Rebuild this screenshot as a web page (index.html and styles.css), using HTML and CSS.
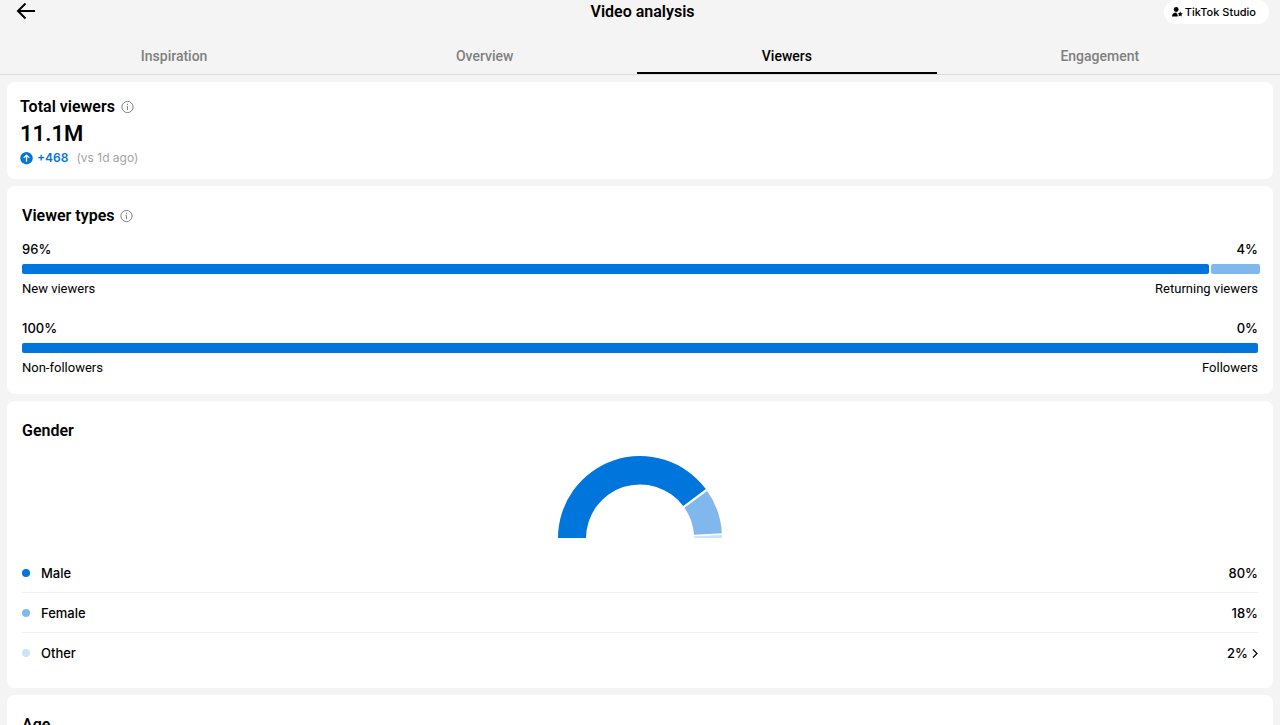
FILE: index.html
```html
<!DOCTYPE html>
<html lang="en">
<head>
    <meta charset="UTF-8">
    <meta name="viewport" content="width=device-width, initial-scale=1.0">
    <title>Video analysis</title>
    <link rel="stylesheet" href="styles.css">
</head>

<body>
    <!-- Top bar -->
    <header class="topbar">
        <button class="back" type="button" aria-label="Back">
            <svg width="20" height="18" viewBox="0 0 20 18" fill="none" stroke="#000" stroke-width="2">
                <path d="M19 8H2M9.500 .500L2 8l7.500 7.500"/>
            </svg>
        </button>
        <h1>Video analysis</h1>
        <a class="studio" href="#studio">
            <svg width="11" height="10" viewBox="0 0 11 10" fill="#000">
                <circle cx="4.200" cy="2.500" r="2.400"/>
                <path d="M0 9.500C0 6.700 1.800 5.500 4.200 5.500L5 7l.8 1-.3 1.500z"/>
                <path d="M8.200 4.600l.8 1.500 1.800.3-1.300 1.200.3 1.800-1.600-.8-1.600.8.300-1.800-1.200-1.200 1.700-.3z"/>
            </svg>
            TikTok Studio
        </a>
    </header>

    <!-- Tabs -->
    <nav class="tabs">
        <a href="#inspiration">Inspiration</a>
        <a href="#overview">Overview</a>
        <a href="#viewers" class="active">Viewers</a>
        <a href="#engagement">Engagement</a>
    </nav>

    <main class="content">
        <section class="card total">
            <h2>Total viewers
                <svg class="info" viewBox="0 0 13 13" fill="none" stroke="#808080">
                    <circle cx="6.500" cy="6" r="5.600"/>
                    <path d="M6.500 2.800v1.200M5.500 5.400h1v3.600"/>
                </svg>
            </h2>
            <p class="number">11.1M</p>
            <p class="change">
                <svg width="13" height="13" viewBox="0 0 13 13" fill="none" stroke="#fff" stroke-width="1.300">
                    <circle cx="6.500" cy="6.200" r="6.200" fill="#0075dc" stroke="none"/>
                    <path d="M6.500 9.700V3.200M3.700 5.900l2.800-2.800 2.800 2.800"/>
                </svg>
                <strong>+468</strong>
                <span>(vs 1d ago)</span>
            </p>
        </section>

        <section class="card types">
            <h2>Viewer types
                <svg class="info" viewBox="0 0 13 13" fill="none" stroke="#808080">
                    <circle cx="6.500" cy="6" r="5.600"/>
                    <path d="M6.500 2.800v1.200M5.500 5.400h1v3.600"/>
                </svg>
            </h2>
            <div class="split">
                <div class="values"><span>96%</span><span>4%</span></div>
                <div class="bar"><i class="dark" style="width: 96%"></i><i class="light" style="width: 4%"></i></div>
                <div class="labels"><span>New viewers</span><span>Returning viewers</span></div>
            </div>
            <div class="split">
                <div class="values"><span>100%</span><span>0%</span></div>
                <div class="bar"><i class="dark" style="width: 100%"></i></div>
                <div class="labels"><span>Non-followers</span><span>Followers</span></div>
            </div>
        </section>

        <section class="card gender">
            <h2>Gender</h2>
            <svg class="chart" width="164" height="82" viewBox="0 0 164 82">
                <path fill="#0075dc" d="M0 82A82 82 0 0 1 147.800 33.100L125.200 50A54 54 0 0 0 28 82z"/>
                <path fill="#80b7ed" d="M149.200 34.900A82 82 0 0 1 163.900 77.300L136 78.800A54 54 0 0 0 126.500 51.800z"/>
                <path fill="#cce3f8" d="M136 80.300L164 79v3H136z"/>
            </svg>
            <ul class="legend">
                <li><i class="dot dark"></i>Male<span>80%</span></li>
                <li><i class="dot light"></i>Female<span>18%</span></li>
                <li><i class="dot pale"></i>Other<span>2%
                    <svg width="6" height="9" viewBox="0 0 6 9" fill="none" stroke="#000" stroke-width="1.200">
                        <path d="M1 .5l4 4-4 4"/>
                    </svg></span></li>
            </ul>
        </section>

        <section class="card age">
            <h2>Age</h2>
        </section>
    </main>
</body>
</html>
```

FILE: styles.css
```css
* {
    margin: 0;
    padding: 0;
    box-sizing: border-box;
}

body {
    font-family: Inter, "Liberation Sans", sans-serif;
    background-color: #f4f4f4;
    color: #000;
    height: 100vh;
    overflow: hidden;
}

a {
    color: inherit;
    text-decoration: none;
}

/* Top bar */
.topbar {
    display: grid;
    grid-template-columns: 1fr auto 1fr;
    align-items: center;
    height: 24px;
    padding: 0 11px 0 16px;
}

.topbar h1,
.card h2 {
    font-family: Roboto, "Liberation Sans", sans-serif;
    font-size: 16px;
    font-weight: 600;
    line-height: 22px;
}

.back {
    justify-self: start;
    display: flex;
    border: 0;
    background: none;
}

.studio {
    justify-self: end;
    display: flex;
    align-items: center;
    gap: 2px;
    height: 24px;
    padding: 0 13px 0 8px;
    background-color: #fff;
    border-radius: 12px;
    font-size: 11px;
    font-weight: 500;
}

/* Tabs */
.tabs {
    display: flex;
    justify-content: space-between;
    height: 51px;
    padding: 22px 11% 0;
    border-bottom: 1px solid #dcdcdc;
    font-family: Roboto, "Liberation Sans", sans-serif;
    font-size: 14px;
    font-weight: 500;
    line-height: 20px;
}

.tabs a {
    position: relative;
    color: #808080;
}

.tabs a.active {
    color: #000;
}

/* The underline is wider than its label */
.tabs a.active::after {
    content: "";
    position: absolute;
    bottom: 0;
    left: 50%;
    width: 300px;
    height: 2px;
    margin-left: -150px;
    background-color: #000;
}

/* Cards */
.content {
    display: flex;
    flex-direction: column;
    gap: 7px;
    padding: 7px 7px 0;
}

.card {
    padding: 19px 15px 17px;
    background-color: #fff;
    border-radius: 8px;
}

.card h2 {
    display: flex;
    align-items: center;
    gap: 6px;
}

.info {
    width: 13px;
    height: 13px;
}

.total {
    padding: 14px 13px 12px;
}

.number {
    font-family: Roboto, "Liberation Sans", sans-serif;
    font-size: 22px;
    font-weight: 600;
    line-height: 31px;
}

.change {
    display: flex;
    align-items: center;
    gap: 4px;
    font-size: 12px;
    line-height: 18px;
}

.change strong {
    color: #0075dc;
    font-weight: 600;
}

.change span {
    margin-left: 4px;
    color: #a3a3a3;
}

/* Viewer types */
.split {
    margin-top: 13px;
    font-size: 13px;
    line-height: 18px;
}

.split + .split {
    margin-top: 21px;
}

.values,
.labels {
    display: flex;
    justify-content: space-between;
}

.values {
    font-weight: 500;
}

.labels {
    font-family: Roboto, "Liberation Sans", sans-serif;
}

.bar {
    display: flex;
    gap: 2px;
    margin: 6px 0;
}

.bar i {
    flex-shrink: 0;
    height: 10px;
    border-radius: 2px;
}

.dark {
    background-color: #0075dc;
}

.light {
    background-color: #80b7ed;
}

.pale {
    background-color: #cce3f8;
}

/* Gender */
.gender {
    padding-bottom: 15px;
}

.chart {
    display: block;
    margin: 14px auto 15px;
}

.legend {
    list-style: none;
}

.legend li {
    display: flex;
    align-items: center;
    height: 40px;
    border-bottom: 1px solid #f0f0f0;
    font-size: 13px;
    font-weight: 500;
}

.legend li:last-child {
    border-bottom: 0;
}

.legend span {
    display: flex;
    align-items: center;
    gap: 4px;
    margin-left: auto;
}

.dot {
    width: 8px;
    height: 8px;
    margin-right: 11px;
    border-radius: 50%;
}
```
